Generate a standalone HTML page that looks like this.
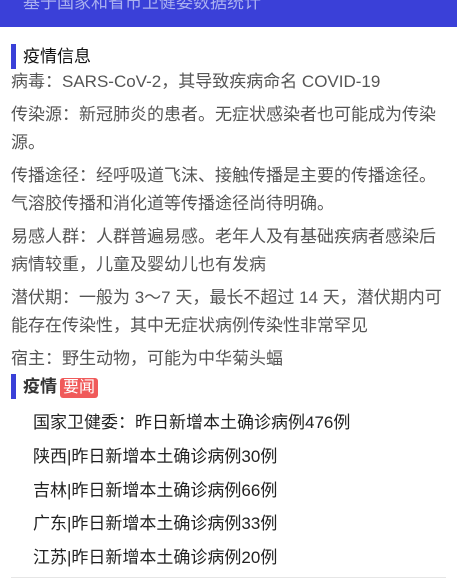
<!DOCTYPE html>
<html><head><meta charset="utf-8"><style>
*{margin:0;padding:0;box-sizing:border-box}
body{width:457px;height:582px;overflow:hidden;background:#fff;font-family:"Liberation Sans","Noto Sans CJK SC",sans-serif;position:relative}
.hdr{position:absolute;left:0;top:0;width:457px;height:27px;background:#3a40d8}
.hdr span{position:absolute;left:23px;top:-12px;color:#aab0f0;font-size:17px}
.h{position:absolute;left:11px;height:25px;border-left:5px solid #3a40d8;padding-left:7px;font-size:17px;line-height:25px;color:#111}
.info{position:absolute;left:11px;top:68px;width:440px;color:#555;font-size:17px;line-height:28px}
.info p{margin-bottom:5px}
.tag{display:inline-block;margin-left:3px;background:#f05a5a;color:#fff;border-radius:3px;padding:0 3px;font-size:16px;line-height:20px;font-weight:normal}
.news{position:absolute;left:33px;top:406px;font-size:17px;color:#222;line-height:33.8px}
.line{position:absolute;left:11px;right:11px;top:577px;height:1px;background:#e6e6e6}
</style></head><body>
<div class="hdr"><span>基于国家和省市卫健委数据统计</span></div>
<div class="h" style="top:44px">疫情信息</div>
<div class="info">
<p>病毒：SARS-CoV-2，其导致疾病命名 COVID-19</p>
<p>传染源：新冠肺炎的患者。无症状感染者也可能成为传染源。</p>
<p>传播途径：经呼吸道飞沫、接触传播是主要的传播途径。气溶胶传播和消化道等传播途径尚待明确。</p>
<p>易感人群：人群普遍易感。老年人及有基础疾病者感染后病情较重，儿童及婴幼儿也有发病</p>
<p>潜伏期：一般为 3～7 天，最长不超过 14 天，潜伏期内可能存在传染性，其中无症状病例传染性非常罕见</p>
<p>宿主：野生动物，可能为中华菊头蝠</p>
</div>
<div class="h" style="top:374px;font-weight:bold;color:#333">疫情<span class="tag">要闻</span></div>
<div class="news">
<div>国家卫健委：昨日新增本土确诊病例476例</div>
<div>陕西|昨日新增本土确诊病例30例</div>
<div>吉林|昨日新增本土确诊病例66例</div>
<div>广东|昨日新增本土确诊病例33例</div>
<div>江苏|昨日新增本土确诊病例20例</div>
</div>
<div class="line"></div>
</body></html>
